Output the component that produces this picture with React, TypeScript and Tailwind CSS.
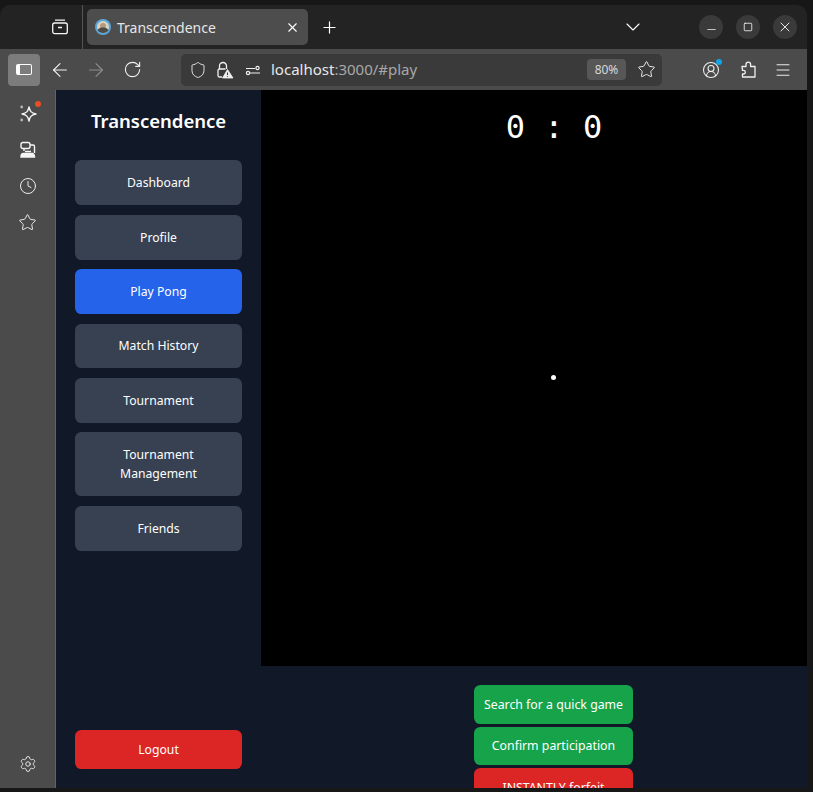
import React from "react";
import {
  ArrowLeft,
  ArrowRight,
  ChevronDown,
  CircleUserRound,
  Clock,
  Menu,
  Minus,
  Plus,
  RotateCw,
  Settings,
  Shield,
  Square,
  Star,
  X,
} from "lucide-react";

const navItems = ["Dashboard", "Profile", "Play Pong", "Match History", "Tournament"];

const NavButton: React.FC<{ label: string; active?: boolean }> = ({ label, active }) => (
  <button
    className={
      active
        ? "h-[44.8px] w-full shrink-0 rounded-[6.4px] bg-[#2563eb] text-[12.2px] leading-[19.2px] text-white"
        : "h-[44.8px] w-full shrink-0 rounded-[6.4px] bg-[#374151] text-[12.2px] leading-[19.2px] text-white"
    }
  >
    {label}
  </button>
);

const WindowButton: React.FC<{ children: React.ReactNode }> = ({ children }) => (
  <div className="flex h-6 w-6 items-center justify-center rounded-full bg-[#3a3a3a] text-white">{children}</div>
);

const TrackerIcon = () => (
  <svg width="22" height="22" viewBox="0 0 22 22" fill="none" stroke="#f5f5f5" strokeWidth="1.4">
    <path d="M12 4c.8 4 2 6 7 7-5 1-6.200 3-7 7-.8-4-2-6-7-7 5-1 6.200-3 7-7z" strokeLinejoin="round" />
    <circle cx="4.700" cy="4" r="1.400" fill="#b5b5b5" stroke="none" />
    <circle cx="4.700" cy="17" r="1.400" fill="#b5b5b5" stroke="none" />
  </svg>
);

const SyncedIcon = () => (
  <svg width="20" height="20" viewBox="0 0 20 20" fill="none" stroke="#f5f5f5" strokeWidth="1.4">
    <rect x="3" y="2.500" width="9" height="6" rx="2" />
    <path d="M6 8.500V11M12 5h3a1.500 1.500 0 0 1 1.500 1.500V13" />
    <path d="M3 17c0-1.800 1-3.500 2.500-3.500h9c1 0 2 1.700 2 3.500z" fill="#f5f5f5" />
    <path d="M7 11.500h6" />
  </svg>
);

const LockWarnIcon = () => (
  <svg width="20" height="20" viewBox="0 0 20 20" fill="none" stroke="#f0f0f0" strokeWidth="1.300">
    <path d="M5.500 9V6a3.500 3.500 0 0 1 7 0v3" />
    <path d="M8 17H5.500A1.500 1.500 0 0 1 4 15.500V10.500A1.500 1.500 0 0 1 5.500 9h6" />
    <path d="M13.500 9.500 19 18H8.500z" fill="#f0f0f0" strokeWidth="0.800" strokeLinejoin="round" />
    <path d="M13.500 12.500v2.500M13.500 16v.8" stroke="#3a3a3a" strokeWidth="1.100" />
  </svg>
);

const PermissionsIcon = () => (
  <svg width="16" height="16" viewBox="0 0 16 16" fill="none" stroke="#f0f0f0" strokeWidth="1.200">
    <circle cx="3" cy="11" r="1.600" />
    <path d="M5 11h10M1 6.500h9" />
    <circle cx="12.500" cy="6" r="1.600" />
  </svg>
);

const PuzzleIcon = () => (
  <svg width="16" height="18" viewBox="0 0 16 18" fill="none" stroke="#f0f0f0" strokeWidth="1.300" strokeLinejoin="round">
    <path d="M1 5.500h4V3.500a2.300 2.300 0 0 1 4.600 0v2h4.400v10.500H1.500v-3h1a1.800 1.800 0 0 0 0-3.600h-1z" />
  </svg>
);

const Favicon = () => (
  <svg width="16" height="16" viewBox="0 0 16 16">
    <circle cx="8" cy="8" r="8" fill="#5aa7d8" />
    <circle cx="8" cy="8" r="6" fill="#d9d2c5" />
    <circle cx="8" cy="7" r="3" fill="#b59a7e" />
    <path d="M2.500 11c1.500-2 3.500-2.500 5.500-2.500s4 .5 5.500 2.500A6.500 6.500 0 0 1 2.500 11z" fill="#4e4a46" />
  </svg>
);

const App: React.FC = () => {
  return (
    <div className="flex h-[792px] w-[813px] flex-col overflow-hidden bg-[#171717] font-['Noto_Sans',sans-serif]">
      <div className="h-[5px] shrink-0" />
      <div className="flex min-h-0 w-[807px] flex-1 flex-col overflow-hidden rounded-t-[10px]">
        {/* title bar */}
        <div className="flex h-[44px] shrink-0 items-center bg-[#232323] text-white">
          <div className="flex h-full w-[83px] shrink-0 items-center justify-end border-r border-[#555555] pr-[14px]">
            <svg width="16" height="16" viewBox="0 0 16 16" fill="none" stroke="#f5f5f5" strokeWidth="1.300">
              <rect x="0.700" y="4" width="14.600" height="10.700" rx="2" />
              <path d="M3 1.200h10M6 8.500h4" />
            </svg>
          </div>
          <div className="ml-1 flex h-9 w-[221px] shrink-0 items-center rounded-[5px] bg-[#4d4d4d] pl-2 pr-[8.5px]">
            <Favicon />
            <span className="ml-[6px] flex-1 text-[14px] text-[#e6e6e6]">Transcendence</span>
            <X size={15} strokeWidth={1.700} />
          </div>
          <Plus size={19} strokeWidth={1.500} className="ml-[11.5px]" />
          <ChevronDown size={24} strokeWidth={1.100} className="ml-[282.5px]" />
          <div className="ml-[54px] flex gap-[13px]">
            <WindowButton>
              <Minus size={13} strokeWidth={1.300} className="translate-y-[2px]" />
            </WindowButton>
            <WindowButton>
              <Square size={10} strokeWidth={1.900} />
            </WindowButton>
            <WindowButton>
              <X size={16} strokeWidth={1.300} />
            </WindowButton>
          </div>
        </div>

        {/* toolbar */}
        <div className="flex h-[41px] shrink-0 items-center bg-[#4b4b4b] pl-2 text-[#f0f0f0]">
          <div className="flex h-8 w-8 items-center justify-center rounded-[4px] bg-[#7c7c7c]">
            <div className="h-[11px] w-[16px] rounded-[2px] border border-l-[4px] border-white bg-[#7c7c7c]" />
          </div>
          <ArrowLeft size={22} strokeWidth={1.200} className="ml-[9px]" />
          <ArrowRight size={22} strokeWidth={1.200} className="ml-[14px] text-[#8e8e8e]" />
          <RotateCw size={19} strokeWidth={1.400} className="ml-[15.5px]" />
          <div className="ml-[39.5px] flex h-8 w-[481px] items-center rounded-[5px] bg-[#3a3a3a] pl-[8px]">
            <Shield size={18} strokeWidth={1.200} />
            <div className="ml-[7px] flex"><LockWarnIcon /></div>
            <div className="ml-[11px] flex"><PermissionsIcon /></div>
            <span className="ml-[10px] flex-1 text-[15px] text-[#a8a8a8]">
              <span className="text-[#e8e8e8]">localhost</span>:3000/#play
            </span>
            <div className="flex h-[21px] w-[39px] items-center justify-center rounded-[4px] bg-[#575757] text-[12px] text-[#d8d8d8]">80%</div>
            <Star size={19} strokeWidth={1.200} className="ml-[10.5px] mr-[6.5px]" />
          </div>
          <div className="relative ml-[40px]">
            <CircleUserRound size={18} strokeWidth={1.400} />
            <div className="absolute -right-[2px] -top-[2px] h-[6px] w-[6px] rounded-full bg-[#0ea5e9]" />
          </div>
          <div className="ml-[21px] flex"><PuzzleIcon /></div>
          <Menu size={18} strokeWidth={1.300} className="ml-[17px]" />
        </div>

        {/* body */}
        <div className="flex min-h-0 flex-1">
          <div className="flex w-[56px] shrink-0 flex-col items-center border-r border-[#636363] bg-[#4b4b4b] pb-[15px] pt-[13px] text-[#f0f0f0]">
            <div className="relative flex h-[22px] w-[22px] items-center justify-center">
              <TrackerIcon />
              <div className="absolute right-[-2px] top-[-2px] h-[6px] w-[6px] rounded-full bg-[#ea4f21]" />
            </div>
            <div className="mt-[15px]"><SyncedIcon /></div>
            <Clock size={18} strokeWidth={1.300} className="mt-[17px]" />
            <Star size={19} strokeWidth={1.200} className="mt-[18px]" />
            <Settings size={18} strokeWidth={1.200} className="mt-auto" />
          </div>

          <div className="flex w-[205px] shrink-0 flex-col bg-[#111827] p-[19.2px]">
            <h1 className="mb-[27.6px] text-center text-[18.5px] font-semibold leading-[23.6px] text-white">Transcendence</h1>
            <div className="flex flex-col gap-[9.6px]">
              {navItems.map((item) => (
                <NavButton key={item} label={item} active={item === "Play Pong"} />
              ))}
              <button className="h-[64px] w-full rounded-[6.4px] bg-[#374151] px-[12px] text-[12.2px] leading-[19.2px] text-white">
                Tournament Management
              </button>
              <NavButton label="Friends" />
            </div>
            <button className="mt-auto h-[38.4px] w-full rounded-[6.4px] bg-[#dc2626] text-[12.2px] leading-[19.2px] text-white">Logout</button>
          </div>

          {/* the game column runs on past the window edge, so its centre sits right of the visible middle */}
          <div className="flex w-[585px] shrink-0 flex-col overflow-hidden bg-[#111827]">
            <div className="relative h-[576px] shrink-0 bg-black">
              <div className="pl-[1px] pt-[15px] text-center font-['DejaVu_Sans_Mono',monospace] text-[32px] leading-[44px] text-white">0 : 0</div>
              <div className="absolute left-[290px] top-[285px] h-[5px] w-[5px] rounded-full bg-white" />
            </div>
            <div className="flex flex-col items-center gap-[3.2px] pt-[19.2px]">
              <button className="h-[38.4px] w-[159px] shrink-0 rounded-[6.4px] bg-[#16a34a] text-[12.3px] leading-[19.2px] text-white">Search for a quick game</button>
              <button className="h-[38.4px] w-[159px] shrink-0 rounded-[6.4px] bg-[#16a34a] text-[12.3px] leading-[19.2px] text-white">Confirm participation</button>
              <button className="h-[38.4px] w-[159px] shrink-0 rounded-[6.4px] bg-[#dc2626] text-[12.3px] leading-[19.2px] text-white">INSTANTLY forfeit</button>
            </div>
          </div>
        </div>
      </div>
      <div className="h-[4px] shrink-0" />
    </div>
  );
};

export default App;
